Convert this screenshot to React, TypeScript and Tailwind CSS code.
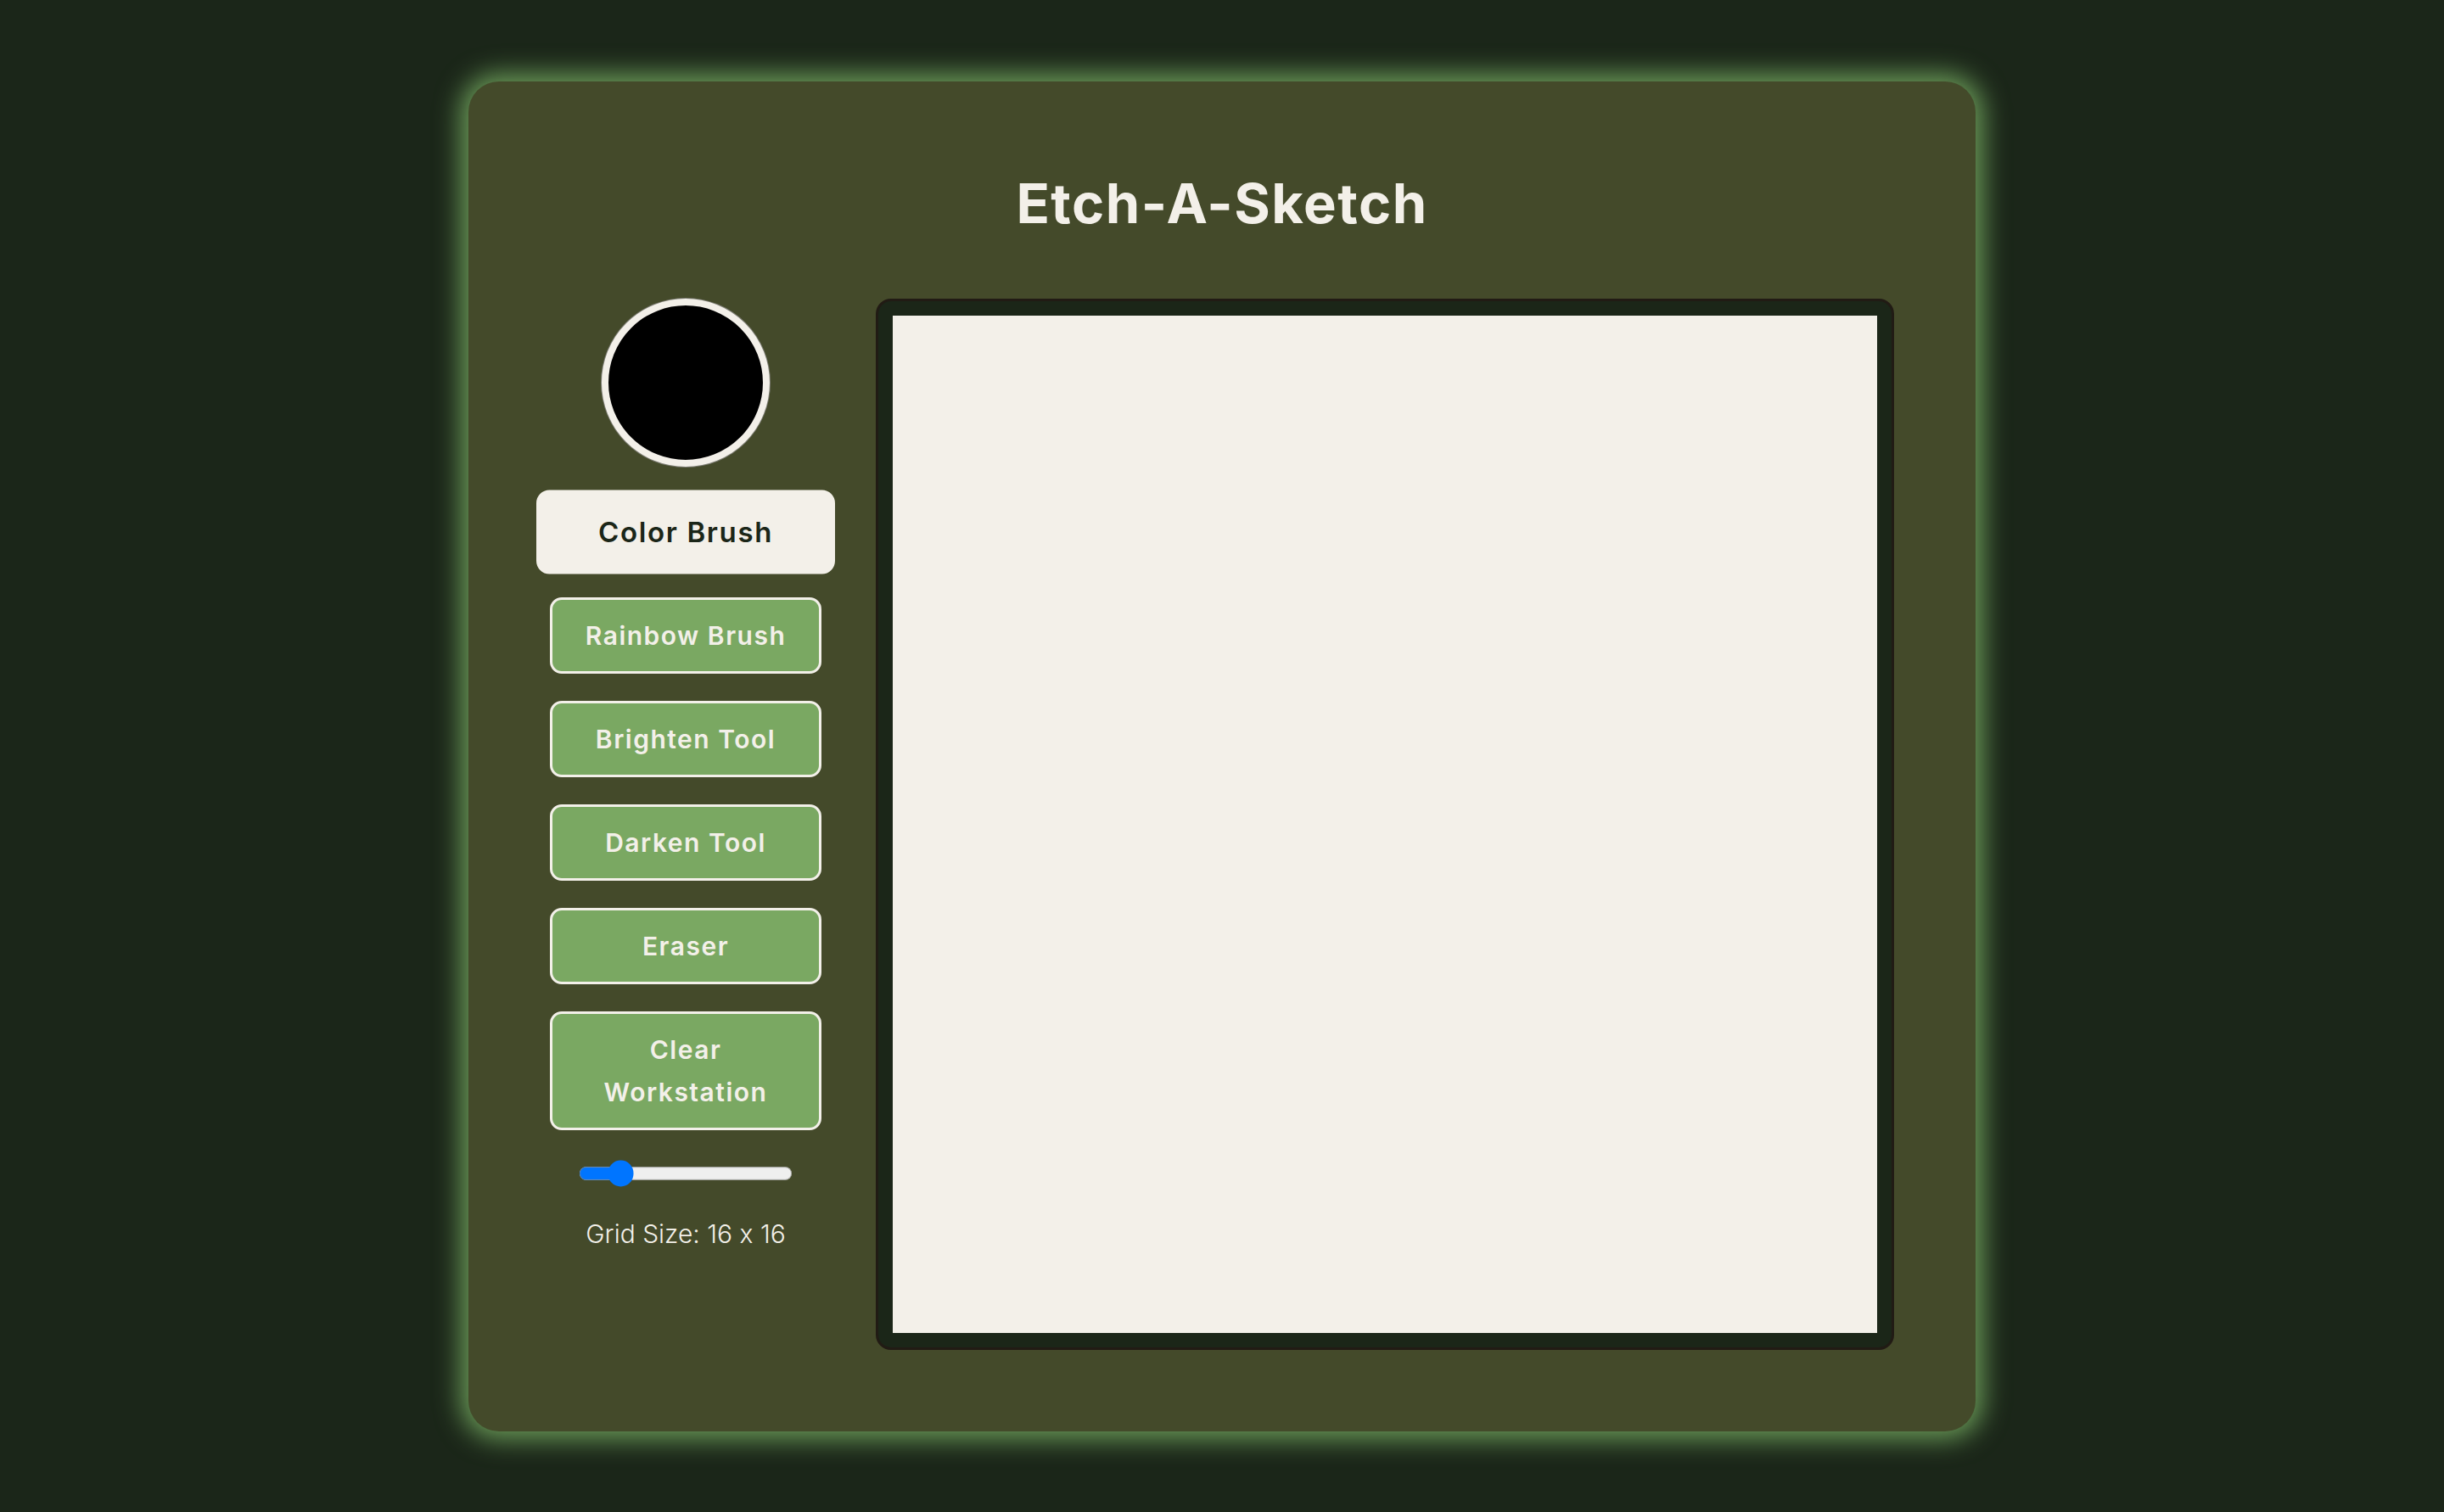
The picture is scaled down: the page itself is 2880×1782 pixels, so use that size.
import {useState} from 'react';

const tools = ['Color Brush', 'Rainbow Brush', 'Brighten Tool', 'Darken Tool', 'Eraser', 'Clear Workstation'];

export default function App() {
  const [active, setActive] = useState('Color Brush');
  const [size, setSize] = useState(16);

  return (
    <div className="min-h-screen w-full bg-[#1b2619] flex items-center justify-center font-['Inter','Noto_Sans',sans-serif] [font-feature-settings:'calt'_0]">
      <div className="w-[1776px] rounded-[36px] bg-[#444a2a] px-[96px] py-[96px] shadow-[0_0_30px_9px_#6a9a58]">
        <h1 className="h-[96px] mb-[64px] text-center text-[65px] leading-[96px] font-bold tracking-[1.5px] text-[#f3f0e9]">
          Etch-A-Sketch
        </h1>
        <div className="flex gap-[64px]">
          <div className="w-[320px] flex flex-col items-center gap-8">
            <div className="w-[198px] h-[198px] rounded-full bg-black border-[8px] border-[#f3f0e9] shadow-[0_0_0_1px_#7d7d74]" />
            {tools.map((tool) => (
              <button
                key={tool}
                onClick={() => setActive(tool)}
                className={
                  tool === active
                    ? 'w-[320px] scale-110 rounded-[14px] border-[3px] border-[#f3f0e9] bg-[#f3f0e9] px-6 py-[17px] text-[30px] leading-[50px] font-semibold tracking-[1.5px] text-[#1b2618]'
                    : 'w-[320px] rounded-[14px] border-[3px] border-[#f3f0e9] bg-[#7aa862] px-6 py-[17px] text-[30px] leading-[50px] font-semibold tracking-[1.5px] text-[#f3f0e9]'
                }
              >
                {tool}
              </button>
            ))}
            <input
              type="range"
              min={1}
              max={100}
              value={size}
              onChange={(e) => setSize(Number(e.target.value))}
              className="mt-[2px] w-[129px] [zoom:1.95]"
            />
            <p className="text-[30px] leading-[46px] font-light text-[#f3f0e9]">
              Grid Size: {size} x {size}
            </p>
          </div>
          <div className="rounded-[18px] border-[3px] border-[#211b14] bg-[#1b2618] p-[17px]">
            <div
              className="w-[1160px] h-[1199px] bg-[#f3f0e9] grid"
              style={{gridTemplateColumns: `repeat(${size}, 1fr)`}}
            >
              {Array.from({length: size * size}).map((_, i) => (
                <div key={i} className="bg-[#f3f0e9]" />
              ))}
            </div>
          </div>
        </div>
      </div>
    </div>
  );
}
